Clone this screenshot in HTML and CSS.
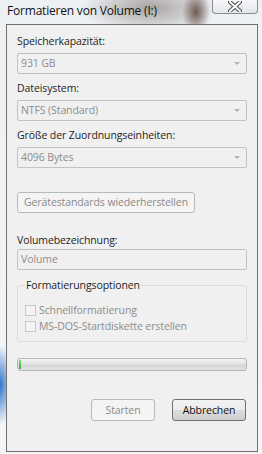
FILE: index.html
```html
<!DOCTYPE html>
<html lang="de">
<head>
<meta charset="utf-8">
<title>Formatieren von Volume (I:)</title>
<link rel="stylesheet" href="styles.css">
</head>
<body>
<div class="window">
  <div class="titlebar">
    <span class="title">Formatieren von Volume (I:)</span>
    <button class="close" aria-label="Schließen">
      <svg width="16" height="11" viewBox="0 0 16 11">
        <path d="M3 1 L13 10 M13 1 L3 10" stroke="#4a4a4a" stroke-width="4" stroke-linecap="round"/>
        <path d="M3 1 L13 10 M13 1 L3 10" stroke="#ffffff" stroke-width="2" stroke-linecap="round"/>
      </svg>
    </button>
  </div>
  <div class="panel">
    <label class="label l1">Speicherkapazität:</label>
    <div class="combo"><span>931 GB</span><i class="arrow"></i></div>
    <label class="label l2">Dateisystem:</label>
    <div class="combo"><span>NTFS (Standard)</span><i class="arrow"></i></div>
    <label class="label l2">Größe der Zuordnungseinheiten:</label>
    <div class="combo"><span>4096 Bytes</span><i class="arrow"></i></div>
    <button class="btn btn-disabled restore">Gerätestandards wiederherstellen</button>
    <label class="label l4">Volumebezeichnung:</label>
    <div class="textbox">Volume</div>
    <fieldset class="group">
      <legend>Formatierungsoptionen</legend>
      <div class="check"><span class="box"></span><span>Schnellformatierung</span></div>
      <div class="check"><span class="box"></span><span>MS-DOS-Startdiskette erstellen</span></div>
    </fieldset>
    <div class="progress"><div class="fill" style="width:2px"></div></div>
    <div class="actions">
      <button class="btn btn-disabled start">Starten</button>
      <button class="btn cancel">Abbrechen</button>
    </div>
  </div>
</div>
</body>
</html>
```
FILE: styles.css
```css
html, body {
  margin: 0;
  padding: 0;
}
body {
  width: 262px;
  height: 454px;
  overflow: hidden;
  font-family: "Open Sans", "Noto Sans", sans-serif;
  font-size: 10.5px;
  letter-spacing: -0.1px;
  color: #1e1e1e;
  background:
    radial-gradient(ellipse 14px 40px at 0px 385px, rgba(40,110,200,0.95), rgba(40,110,200,0) 100%),
    radial-gradient(ellipse 14px 22px at 196px 12px, rgba(90,70,60,0.85), rgba(90,70,60,0) 100%),
    radial-gradient(ellipse 70px 26px at 150px 8px, rgba(120,110,105,0.6), rgba(120,110,105,0) 100%),
    linear-gradient(#eef1f4, #f3f5f7);
}
.window {
  display: flex;
  flex-direction: column;
}
.titlebar {
  height: 24px;
  display: flex;
  justify-content: space-between;
  align-items: flex-start;
}
.title {
  padding: 3px 0 0 7px;
  font-size: 12px;
  letter-spacing: -0.2px;
  line-height: 15px;
  color: #111;
}
.close {
  margin: 0 4px 0 0;
  width: 46px;
  height: 14px;
  padding: 0;
  border: 1px solid #8c8c8c;
  border-top: none;
  border-radius: 0 0 4px 4px;
  background: linear-gradient(#f6f7f8, #e3e6ea);
  display: flex;
  align-items: center;
  justify-content: center;
}
.panel {
  margin-left: 6px;
  width: 230px;
  height: 426px;
  padding: 0 10px;
  border: 1px solid #6f6f6f;
  background: #f0f0f0;
  display: flex;
  flex-direction: column;
  align-items: flex-start;
}
.label {
  display: block;
  line-height: 15px;
  margin-bottom: 4px;
  color: #1e1e1e;
}
.l1 { margin-top: 9px; }
.l2 { margin-top: 7px; }
.l4 { margin-top: 20px; margin-bottom: 1px; }
.combo, .textbox {
  box-sizing: border-box;
  width: 230px;
  height: 21px;
  border: 1px solid #c2c2c2;
  border-radius: 2px;
  background: #f0f0f0;
  color: #8d8d8d;
  display: flex;
  align-items: center;
  justify-content: space-between;
  padding: 0 6px 0 3px;
  line-height: 15px;
}
.arrow {
  width: 0;
  height: 0;
  border-left: 3px solid transparent;
  border-right: 3px solid transparent;
  border-top: 3px solid #b3b3b3;
}
.btn {
  box-sizing: border-box;
  height: 21px;
  font-family: inherit;
  font-size: 10.5px;
  letter-spacing: -0.1px;
  line-height: 15px;
  padding: 0;
  border-radius: 3px;
}
.btn-disabled {
  border: 1px solid #b5b9bc;
  background: #f4f4f4;
  color: #8a8a8a;
}
.restore {
  margin-top: 24px;
  width: 178px;
}
.group {
  box-sizing: border-box;
  margin: 8px 0 0 0;
  width: 230px;
  height: 64px;
  padding: 9px 7px 0;
  border: 1px solid #dcdcdc;
  border-radius: 3px;
}
.group legend {
  padding: 0 1px;
  line-height: 15px;
  color: #1e1e1e;
}
.check {
  display: flex;
  align-items: center;
  height: 16px;
  color: #8d8d8d;
  line-height: 15px;
}
.box {
  box-sizing: border-box;
  width: 11px;
  height: 11px;
  border: 1px solid #c6c6c6;
  background: #f4f4f4;
  margin-right: 3px;
}
.progress {
  box-sizing: border-box;
  margin-top: 16px;
  width: 230px;
  height: 13px;
  border: 1px solid #b6b6b6;
  border-radius: 3px;
  background: linear-gradient(#f4f4f4 0%, #e2e2e2 45%, #d4d4d4 55%, #e4e4e4 100%);
  padding: 1px;
}
.fill {
  height: 9px;
  background: linear-gradient(#7fe07f, #22b422);
}
.actions {
  margin-top: 28px;
  align-self: stretch;
  display: flex;
  justify-content: flex-end;
  gap: 17px;
  padding-right: 1px;
}
.start {
  width: 64px;
  height: 22px;
}
.cancel {
  width: 74px;
  height: 22px;
  border: 1px solid #707070;
  background: linear-gradient(#f2f2f2 0%, #ebebeb 49%, #dddddd 50%, #cfcfcf 100%);
  color: #111;
}
```
